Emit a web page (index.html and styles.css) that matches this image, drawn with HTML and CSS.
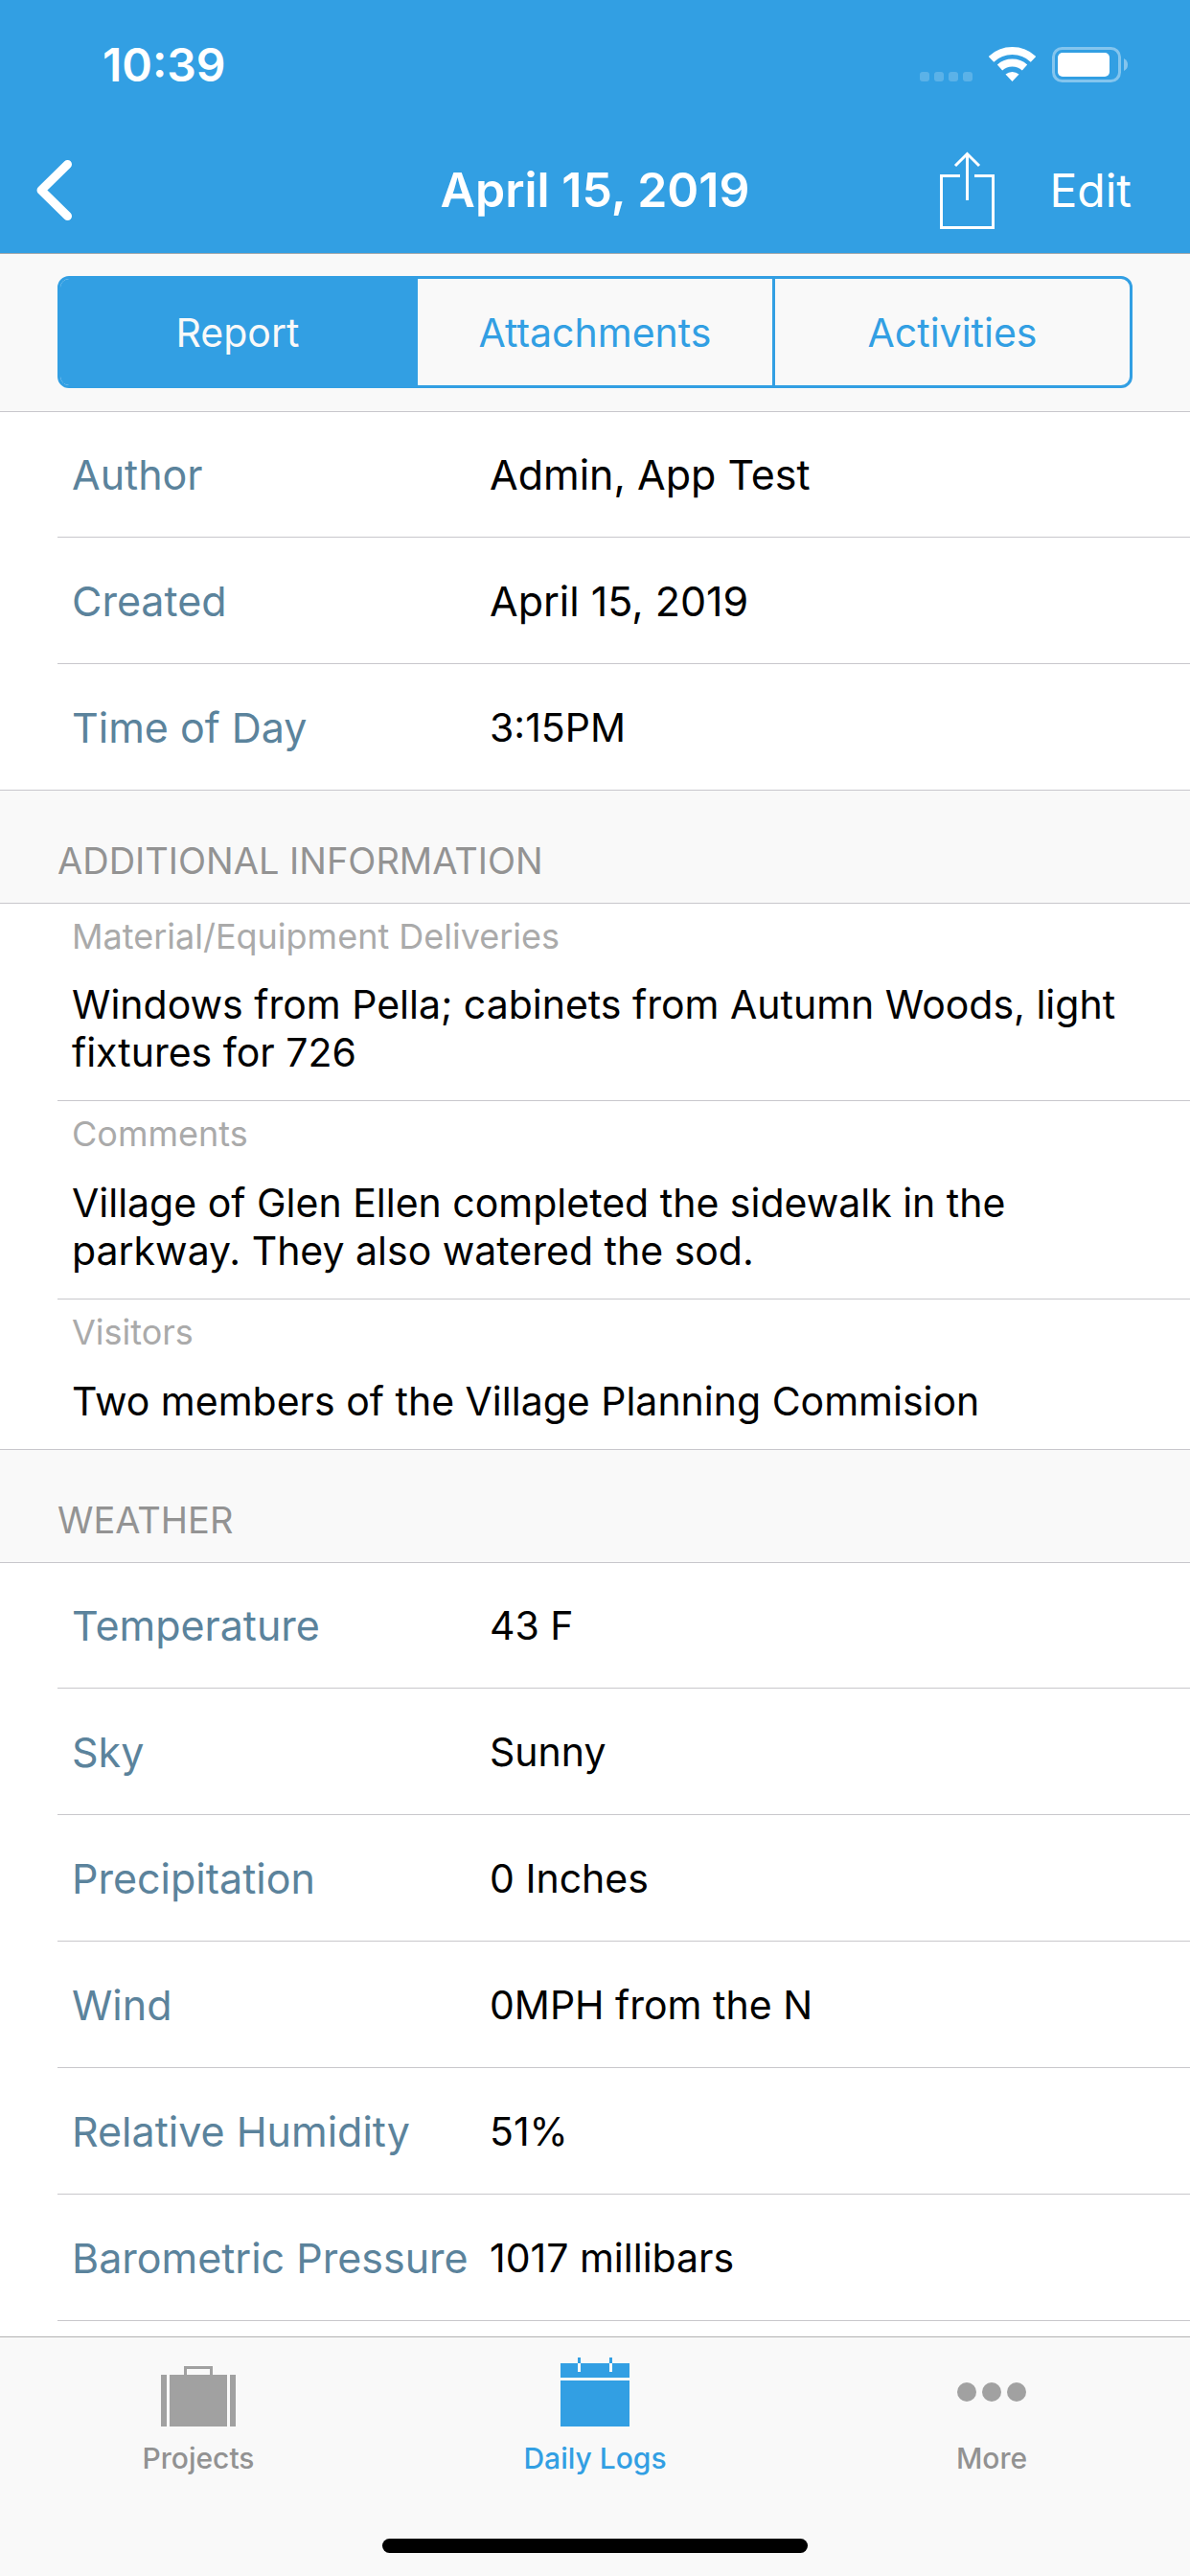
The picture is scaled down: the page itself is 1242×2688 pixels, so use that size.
FILE: index.html
```html
<!DOCTYPE html>
<html lang="en">

<head>
    <meta charset="UTF-8">
    <meta name="viewport" content="width=device-width, initial-scale=1.0">
    <title>Daily Log</title>
    <link rel="stylesheet" href="styles.css">
</head>

<body>
    <header class="header">
        <div class="status">
            <span class="time">10:39</span>
            <div class="status-icons">
                <svg width="55" height="37" viewBox="0 0 55 37" fill="#fff" opacity="0.2">
                    <rect x="0" y="26" width="10" height="10" rx="3" />
                    <rect x="15" y="26" width="10" height="10" rx="3" />
                    <rect x="30" y="26" width="10" height="10" rx="3" />
                    <rect x="45" y="26" width="10" height="10" rx="3" />
                </svg>
                <svg width="49" height="37" viewBox="0 0 49 37" fill="none" stroke="#fff" stroke-width="8">
                    <path d="M2.5 12.8 A32 32 0 0 1 46.5 12.8" />
                    <path d="M11.5 21.5 A19.5 19.5 0 0 1 37.5 21.5" />
                    <path d="M24.5 36 L17.5 28.5 A11 11 0 0 1 31.5 28.5 Z" fill="#fff" stroke="none" />
                </svg>
                <svg width="79" height="37" viewBox="0 0 79 37">
                    <rect x="1.5" y="1.5" width="69" height="34" rx="9" fill="none" stroke="#fff" stroke-width="3" opacity="0.4" />
                    <rect x="6" y="6" width="54" height="25" rx="5" fill="#fff" />
                    <path d="M75 12 Q79 14 79 18.5 Q79 23 75 25 Z" fill="#fff" opacity="0.4" />
                </svg>
            </div>
        </div>
        <div class="navbar">
            <button class="back" type="button" aria-label="Back">
                <svg width="37" height="63" viewBox="0 0 37 63" fill="none" stroke="#fff" stroke-width="9" stroke-linecap="round" stroke-linejoin="round">
                    <path d="M32.5 4.5 L5 31.5 L32.5 58.5" />
                </svg>
            </button>
            <h1>April 15, 2019</h1>
            <div class="actions">
                <button type="button" aria-label="Share">
                    <svg width="57" height="81" viewBox="0 0 57 81" fill="none" stroke="#fff" stroke-width="3">
                        <path d="M21 25.5 H1.5 V79.5 H55.5 V25.5 H36" />
                        <path d="M28.5 51 V2 M16 15 L28.5 2.5 L41 15" />
                    </svg>
                </button>
                <button type="button">Edit</button>
            </div>
        </div>
    </header>

    <div class="toolbar">
        <div class="segments">
            <button class="active" type="button">Report</button>
            <button type="button">Attachments</button>
            <button type="button">Activities</button>
        </div>
    </div>

    <main>
        <dl class="list">
            <div class="row">
                <dt>Author</dt>
                <dd class="large">Admin, App Test</dd>
            </div>
            <div class="row">
                <dt>Created</dt>
                <dd class="large">April 15, 2019</dd>
            </div>
            <div class="row">
                <dt>Time of Day</dt>
                <dd>3:15PM</dd>
            </div>
        </dl>

        <h2>ADDITIONAL INFORMATION</h2>
        <dl class="list">
            <div class="note">
                <dt>Material/Equipment Deliveries</dt>
                <dd>Windows from Pella; cabinets from Autumn Woods, light fixtures for 726</dd>
            </div>
            <div class="note">
                <dt>Comments</dt>
                <dd>Village of Glen Ellen completed the sidewalk in the parkway. They also watered the sod.</dd>
            </div>
            <div class="note">
                <dt>Visitors</dt>
                <dd>Two members of the Village Planning Commision</dd>
            </div>
        </dl>

        <h2>WEATHER</h2>
        <dl class="list open">
            <div class="row">
                <dt>Temperature</dt>
                <dd>43 F</dd>
            </div>
            <div class="row">
                <dt>Sky</dt>
                <dd>Sunny</dd>
            </div>
            <div class="row">
                <dt>Precipitation</dt>
                <dd>0 Inches</dd>
            </div>
            <div class="row">
                <dt>Wind</dt>
                <dd>0MPH from the N</dd>
            </div>
            <div class="row">
                <dt>Relative Humidity</dt>
                <dd>51%</dd>
            </div>
            <div class="row">
                <dt>Barometric Pressure</dt>
                <dd>1017 millibars</dd>
            </div>
        </dl>
    </main>

    <footer class="tabbar">
        <nav>
            <a href="#">
                <svg width="78" height="72" viewBox="0 0 78 72" fill="#a1a1a1">
                    <rect x="0" y="18" width="6" height="54" />
                    <rect x="9" y="18" width="60" height="54" />
                    <rect x="72" y="18" width="6" height="54" />
                    <path d="M25.5 18 V10.5 H52.5 V18" fill="none" stroke="#a1a1a1" stroke-width="3" />
                </svg>
                <span>Projects</span>
            </a>
            <a class="active" href="#">
                <svg width="72" height="72" viewBox="0 0 72 72" fill="#329fe3">
                    <path d="M0 6 H18 V15 H21 V6 H51 V15 H54 V6 H72 V21 H0 Z" />
                    <rect x="18" y="0" width="3" height="6" />
                    <rect x="51" y="0" width="3" height="6" />
                    <rect x="0" y="24" width="72" height="48" />
                </svg>
                <span>Daily Logs</span>
            </a>
            <a href="#">
                <svg width="72" height="72" viewBox="0 0 72 72" fill="#a1a1a1">
                    <circle cx="10" cy="36" r="10" />
                    <circle cx="36" cy="36" r="10" />
                    <circle cx="62" cy="36" r="10" />
                </svg>
                <span>More</span>
            </a>
        </nav>
        <div class="home"></div>
    </footer>
</body>

</html>
```

FILE: styles.css
```css
* {
    margin: 0;
    padding: 0;
    box-sizing: border-box;
}

body {
    display: flex;
    flex-direction: column;
    min-height: 100vh;
    background-color: #fff;
    color: #000;
    font-family: Inter, "Liberation Sans", sans-serif;
    font-size: 41px;
}

button {
    border: none;
    background: none;
    color: inherit;
    font: inherit;
    cursor: pointer;
}

svg {
    display: block;
}

/* header */
.header {
    background-color: #329fe3;
    color: #fff;
    border-bottom: 1px solid #a2a8ac;
}

.status {
    display: flex;
    justify-content: space-between;
    align-items: center;
    height: 132px;
    padding: 3px 65px 0 107px;
}

.time {
    font-size: 48px;
    font-weight: 600;
}

.status-icons {
    display: flex;
    gap: 17px;
}

.navbar {
    display: grid;
    grid-template-columns: 1fr auto 1fr;
    align-items: center;
    height: 132px;
    padding: 0 38px;
}

.navbar h1 {
    font-size: 50px;
    font-weight: 600;
}

.back {
    justify-self: start;
}

.actions {
    display: flex;
    justify-content: flex-end;
    align-items: center;
    gap: 57px;
    padding-right: 23px;
    font-size: 48px;
}

/* segmented control */
.toolbar {
    padding: 23px 60px 24px;
    background-color: #f9f9f9;
    border-bottom: 1px solid #c8c7cc;
}

.segments {
    display: flex;
    height: 117px;
    border: 3px solid #329fe3;
    border-radius: 12px;
    overflow: hidden;
}

.segments button {
    flex: 1;
    color: #329fe3;
    border-left: 3px solid #329fe3;
}

.segments button:first-child {
    border-left: none;
}

.segments .active {
    background-color: #329fe3;
    color: #f9f9f9;
}

/* lists */
main {
    flex: 1;
}

h2 {
    height: 118px;
    padding: 48px 60px 0;
    background-color: #f9f9f9;
    border-bottom: 1px solid #c8c7cc;
    color: #939393;
    font-size: 38px;
    font-weight: 400;
    line-height: 50px;
}

.list {
    padding-left: 60px;
    border-bottom: 1px solid #c8c7cc;
}

.list.open {
    border-bottom: none;
}

.row {
    display: flex;
    align-items: center;
    min-height: 132px;
    padding-left: 15px;
    border-bottom: 1px solid #c8c7cc;
}

.row:first-child {
    min-height: 131px;
}

.list:not(.open) > :last-child {
    min-height: 131px;
    border-bottom: none;
}

.row dt {
    width: 436px;
    color: #5b839c;
    font-size: 43px;
}

.row .large {
    font-size: 43px;
}

.note {
    padding: 12px 60px 25px 15px;
    border-bottom: 1px solid #c8c7cc;
}

.note dt {
    margin-bottom: 25px;
    color: #aaa;
    font-size: 36px;
    line-height: 44px;
}

.note:first-child dt {
    margin-bottom: 24px;
}

.note dd {
    line-height: 50px;
}

/* tab bar */
.tabbar {
    padding: 21px 0 24px;
    background-color: #f9f9f9;
    border-top: 1px solid #b2b2b2;
}

.tabbar nav {
    display: flex;
}

.tabbar a {
    flex: 1;
    display: flex;
    flex-direction: column;
    align-items: center;
    gap: 15px;
    color: #929292;
    font-size: 30px;
    font-weight: 500;
    line-height: 36px;
    text-decoration: none;
}

.tabbar .active {
    color: #329fe3;
}

.home {
    width: 444px;
    height: 15px;
    margin: 66px auto 0;
    background-color: #000;
    border-radius: 8px;
}
```
